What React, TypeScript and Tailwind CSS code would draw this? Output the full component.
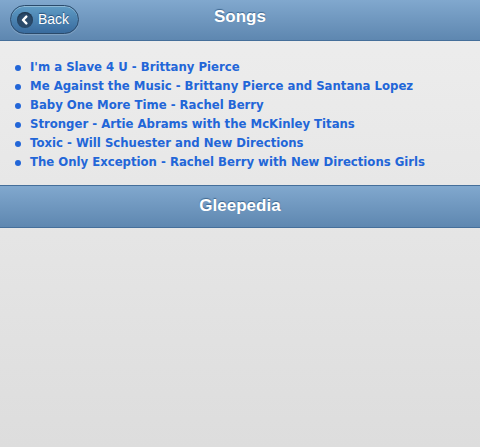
const songs = [
  "I'm a Slave 4 U - Brittany Pierce",
  "Me Against the Music - Brittany Pierce and Santana Lopez",
  "Baby One More Time - Rachel Berry",
  "Stronger - Artie Abrams with the McKinley Titans",
  "Toxic - Will Schuester and New Directions",
  "The Only Exception - Rachel Berry with New Directions Girls",
];

function BackIcon() {
  return (
    <span className="flex h-[16px] w-[16px] items-center justify-center rounded-full bg-[#2a4a6b] shadow-[inset_0_1px_2px_rgba(0,0,0,0.4)]">
      <svg width="10" height="10" viewBox="0 0 10 10">
        <path d="M6.3 1.6 L3 5 L6.3 8.4" fill="none" stroke="#fff" strokeWidth="2.4" strokeLinecap="round" strokeLinejoin="round" />
      </svg>
    </span>
  );
}

export default function App() {
  return (
    <div className="flex min-h-[447px] w-[480px] flex-col bg-gradient-to-b from-[#eeeeee] to-[#dddddd] font-['Liberation_Sans',Arial,sans-serif]">
      {/* Header */}
      <header className="relative flex h-[41px] items-center justify-center border-b border-[#456f9a] bg-gradient-to-b from-[#81a8ce] to-[#5e87b0]">
        <button className="absolute left-[10px] top-[5px] flex h-[29px] items-center gap-[5px] rounded-full border border-[#2a4a6b] bg-gradient-to-b from-[#5f9cc5] to-[#396b9e] pl-[6px] pr-[9px] text-[14px] text-white shadow-[inset_0_1px_0_rgba(255,255,255,0.3),0_1px_1px_rgba(255,255,255,0.2)] [text-shadow:0_-1px_1px_#254f7a]">
          <BackIcon />
          Back
        </button>
        <h1 className="-mt-[6px] text-[17px] font-bold text-white [text-shadow:0_-1px_1px_#3e6790]">Songs</h1>
      </header>

      {/* Content */}
      <main className="px-[15px] pb-[12px] pt-[17px]">
        <ul className="flex flex-col">
          {songs.map((s) => (
            <li key={s} className="flex h-[19px] items-center gap-[9px] text-[#2266d8]">
              <span className="h-[6px] w-[6px] rounded-full bg-[#2266d8]" />
              <a className="font-['Comic_Sans_MS','DejaVu_Sans',sans-serif] text-[11.7px] font-bold">{s}</a>
            </li>
          ))}
        </ul>
      </main>

      {/* Footer */}
      <footer className="mt-[1px] flex h-[43px] items-center justify-center border-y border-[#456f9a] bg-gradient-to-b from-[#81a8ce] to-[#5e87b0]">
        <h2 className="-mt-[1px] text-[17px] font-bold text-white [text-shadow:0_-1px_1px_#3e6790]">Gleepedia</h2>
      </footer>
    </div>
  );
}
